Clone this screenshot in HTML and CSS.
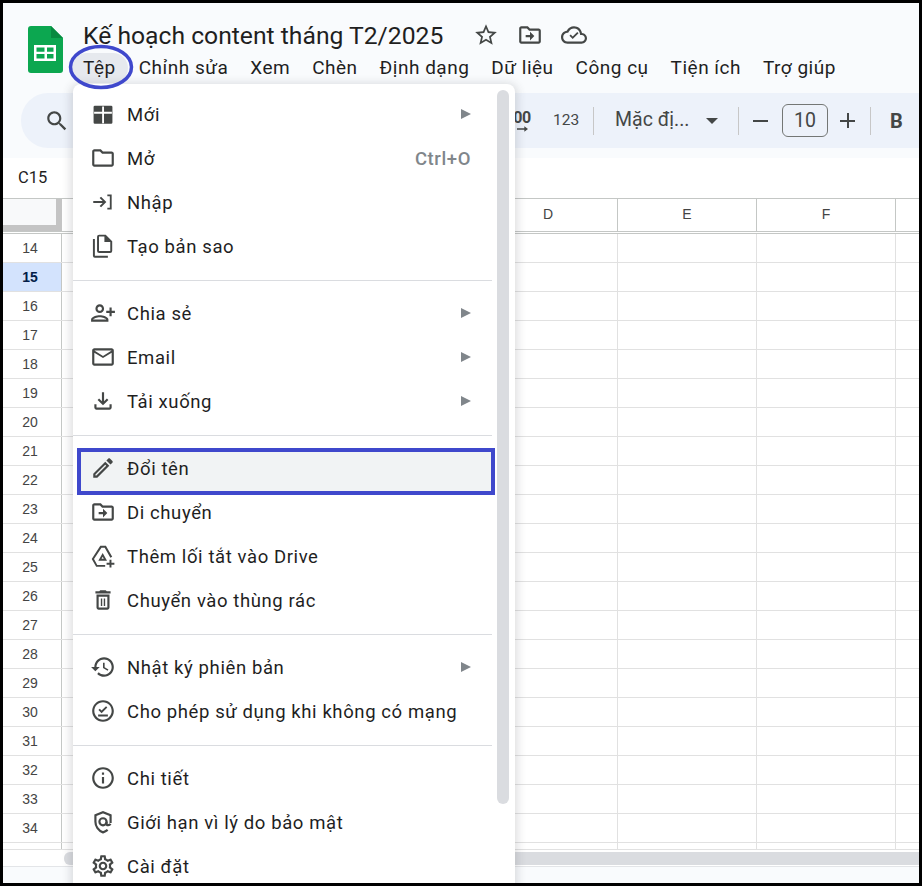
FILE: index.html
```html
<!DOCTYPE html>
<html lang="vi">
<head>
<meta charset="utf-8">
<title>Kế hoạch content tháng T2/2025</title>
<link rel="stylesheet" href="styles.css">
</head>
<body>
<div class="frame">
  <header class="head">
    <svg class="logo" viewBox="0 0 35 47"><path fill="#0ca750" d="M3 0h20l12 12v32a3 3 0 0 1-3 3H3a3 3 0 0 1-3-3V3a3 3 0 0 1 3-3z"/><path fill="#078a40" d="M23 0l12 12H23z"/><path fill="#fff" fill-rule="evenodd" d="M6 19h22v16H6zm2.500 2.500v4.300h8v-4.300zm10.500 0v4.300h6.500v-4.300zM8.500 28v4.500h8V28zM19 28v4.500h6.500V28z"/></svg>
    <div class="head-main">
      <div class="title-row">
        <h1 class="title">Kế hoạch content tháng T2/2025</h1>
        <div class="title-icons">
          <svg class="ti" viewBox="0 0 24 24"><path d="M22 9.240l-7.190-.62L12 2 9.190 8.630 2 9.240l5.460 4.730L5.820 21 12 17.270 18.180 21l-1.630-7.030L22 9.240zM12 15.400l-3.760 2.270 1-4.280-3.320-2.880 4.380-.38L12 6.100l1.710 4.040 4.380.38-3.320 2.880 1 4.280L12 15.400z"/></svg>
          <svg class="ti" viewBox="0 0 24 24"><path d="M20 6h-8l-2-2H4c-1.100 0-1.990.9-1.990 2L2 18c0 1.100.9 2 2 2h16c1.100 0 2-.9 2-2V8c0-1.100-.9-2-2-2zm0 12H4V6h5.170l2 2H20v10zm-8-4H8v-2h4V9l4 4-4 4v-3z"/></svg>
          <svg class="ti" viewBox="0 0 24 24"><path d="M19.350 10.040C18.670 6.590 15.640 4 12 4 9.110 4 6.600 5.640 5.350 8.040 2.340 8.360 0 10.910 0 14c0 3.310 2.690 6 6 6h13c2.760 0 5-2.240 5-5 0-2.640-2.050-4.780-4.650-4.960zM19 18H6c-2.210 0-4-1.790-4-4 0-2.050 1.530-3.760 3.560-3.970l1.070-.11.5-.95C8.080 7.140 9.940 6 12 6c2.620 0 4.880 1.860 5.390 4.430l.3 1.500 1.530.11c1.560.1 2.780 1.410 2.780 2.960 0 1.650-1.350 3-3 3zm-8.200-2.200l-3-3 1.200-1.200 1.800 1.800 4.200-4.200 1.200 1.200z"/></svg>
        </div>
      </div>
      <nav class="menubar">
        <span class="mb mb-active">Tệp</span>
        <span class="mb">Chỉnh sửa</span>
        <span class="mb">Xem</span>
        <span class="mb">Chèn</span>
        <span class="mb">Định dạng</span>
        <span class="mb">Dữ liệu</span>
        <span class="mb">Công cụ</span>
        <span class="mb">Tiện ích</span>
        <span class="mb">Trợ giúp</span>
      </nav>
    </div>
  </header>

  <div class="toolbar">
    <svg class="search" viewBox="0 0 24 24"><path d="M15.500 14h-.79l-.28-.27C15.410 12.590 16 11.110 16 9.500 16 5.910 13.090 3 9.500 3S3 5.910 3 9.500 5.910 16 9.500 16c1.610 0 3.090-.59 4.230-1.570l.27.28v.79l5 4.990L20.490 19l-4.990-5zm-6 0C7.010 14 5 11.990 5 9.500S7.010 5 9.500 5 14 7.010 14 9.500 11.990 14 9.500 14z"/></svg>
    <div class="tools">
      <span class="dec"><span class="dec-t">00</span><svg class="dec-a" viewBox="0 0 12 8"><path d="M0 3.200h8V1l4 3-4 3V4.800H0z"/></svg></span>
      <span class="t123">123</span>
      <i class="sep"></i>
      <span class="fontname">Mặc đị...</span>
      <i class="caret"></i>
      <i class="sep sep2"></i>
      <i class="minus"></i>
      <span class="size">10</span>
      <i class="plus"></i>
      <i class="sep sep3"></i>
      <b class="bold">B</b>
    </div>
  </div>

  <div class="formula"><span class="cellref">C15</span></div>

  <div class="sheet">
    <div class="colhead">
      <div class="corner"></div>
      <div class="c-abc"></div>
      <div class="c-col">D</div>
      <div class="c-col">E</div>
      <div class="c-col">F</div>
      <div class="c-rest"></div>
    </div>
    <div class="row"><div class="rh">14</div><div class="c-abc"></div><div class="cell"></div><div class="cell"></div><div class="cell"></div></div>
    <div class="row"><div class="rh rh-on">15</div><div class="c-abc"></div><div class="cell"></div><div class="cell"></div><div class="cell"></div></div>
    <div class="row"><div class="rh">16</div><div class="c-abc"></div><div class="cell"></div><div class="cell"></div><div class="cell"></div></div>
    <div class="row"><div class="rh">17</div><div class="c-abc"></div><div class="cell"></div><div class="cell"></div><div class="cell"></div></div>
    <div class="row"><div class="rh">18</div><div class="c-abc"></div><div class="cell"></div><div class="cell"></div><div class="cell"></div></div>
    <div class="row"><div class="rh">19</div><div class="c-abc"></div><div class="cell"></div><div class="cell"></div><div class="cell"></div></div>
    <div class="row"><div class="rh">20</div><div class="c-abc"></div><div class="cell"></div><div class="cell"></div><div class="cell"></div></div>
    <div class="row"><div class="rh">21</div><div class="c-abc"></div><div class="cell"></div><div class="cell"></div><div class="cell"></div></div>
    <div class="row"><div class="rh">22</div><div class="c-abc"></div><div class="cell"></div><div class="cell"></div><div class="cell"></div></div>
    <div class="row"><div class="rh">23</div><div class="c-abc"></div><div class="cell"></div><div class="cell"></div><div class="cell"></div></div>
    <div class="row"><div class="rh">24</div><div class="c-abc"></div><div class="cell"></div><div class="cell"></div><div class="cell"></div></div>
    <div class="row"><div class="rh">25</div><div class="c-abc"></div><div class="cell"></div><div class="cell"></div><div class="cell"></div></div>
    <div class="row"><div class="rh">26</div><div class="c-abc"></div><div class="cell"></div><div class="cell"></div><div class="cell"></div></div>
    <div class="row"><div class="rh">27</div><div class="c-abc"></div><div class="cell"></div><div class="cell"></div><div class="cell"></div></div>
    <div class="row"><div class="rh">28</div><div class="c-abc"></div><div class="cell"></div><div class="cell"></div><div class="cell"></div></div>
    <div class="row"><div class="rh">29</div><div class="c-abc"></div><div class="cell"></div><div class="cell"></div><div class="cell"></div></div>
    <div class="row"><div class="rh">30</div><div class="c-abc"></div><div class="cell"></div><div class="cell"></div><div class="cell"></div></div>
    <div class="row"><div class="rh">31</div><div class="c-abc"></div><div class="cell"></div><div class="cell"></div><div class="cell"></div></div>
    <div class="row"><div class="rh">32</div><div class="c-abc"></div><div class="cell"></div><div class="cell"></div><div class="cell"></div></div>
    <div class="row"><div class="rh">33</div><div class="c-abc"></div><div class="cell"></div><div class="cell"></div><div class="cell"></div></div>
    <div class="row"><div class="rh">34</div><div class="c-abc"></div><div class="cell"></div><div class="cell"></div><div class="cell"></div></div>
    <div class="row row-cut"><div class="rh"></div><div class="c-abc"></div><div class="cell"></div><div class="cell"></div><div class="cell"></div></div>
  </div>
  <div class="hscroll"><div class="hthumb"></div></div>
  <div class="foot"></div>

  <div class="menu">
    <div class="menu-thumb"></div>
    <div class="mi"><svg class="ic" viewBox="0 0 24 24"><path fill-rule="evenodd" d="M4.500 4.400h15a1.200 1.200 0 0 1 1.200 1.200v14.200a1.200 1.200 0 0 1-1.200 1.200h-15a1.200 1.200 0 0 1-1.200-1.200V5.600a1.200 1.200 0 0 1 1.200-1.200zM3.800 10v1.700h7.400v8.800h1.700v-8.800h7.300V10h-7.300V5h-1.700v5z"/></svg><span class="lb">Mới</span><i class="arr"></i></div>
    <div class="mi"><svg class="ic" viewBox="0 0 24 24"><path d="M9.170 6l2 2H20v10H4V6h5.170M10 4H4c-1.100 0-1.990.9-1.990 2L2 18c0 1.100.9 2 2 2h16c1.100 0 2-.9 2-2V8c0-1.100-.9-2-2-2h-8l-2-2z"/></svg><span class="lb">Mở</span><span class="kb">Ctrl+O</span></div>
    <div class="mi"><svg class="ic" viewBox="0 0 24 24"><path d="M16 5h4v14h-4v-1.700h2.300V6.700H16zM3 11.100h8.700L8.900 8.300l1.300-1.200 4.900 4.900-4.900 4.900-1.300-1.200 2.800-2.800H3z"/></svg><span class="lb">Nhập</span></div>
    <div class="mi"><svg class="ic" viewBox="0 0 24 24"><path d="M14.500 1.500H8.500A2 2 0 0 0 6.500 3.500v13a2 2 0 0 0 2 2h10a2 2 0 0 0 2-2V7.500zM18.700 16.700H8.300V3.300h5v5h5.400zM4.500 5.500H2.700v15.500a1.800 1.800 0 0 0 1.800 1.800h12v-1.800h-12z"/></svg><span class="lb">Tạo bản sao</span></div>
    <div class="msep"></div>
    <div class="mi"><svg class="ic" viewBox="0 0 24 24"><path transform="matrix(-1 0 0 1 24 0)" d="M15 12c2.210 0 4-1.790 4-4s-1.790-4-4-4-4 1.790-4 4 1.790 4 4 4zm0-6c1.100 0 2 .9 2 2s-.9 2-2 2-2-.9-2-2 .9-2 2-2zm0 8c-2.670 0-8 1.340-8 4v2h16v-2c0-2.660-5.330-4-8-4zm-6 4c.22-.72 3.310-2 6-2 2.700 0 5.800 1.290 6 2H9zm-3-3v-3h3v-2H6V7H4v3H1v2h3v3h2z"/></svg><span class="lb">Chia sẻ</span><i class="arr"></i></div>
    <div class="mi"><svg class="ic" viewBox="0 0 24 24"><path d="M22 6c0-1.100-.9-2-2-2H4c-1.100 0-2 .9-2 2v12c0 1.100.9 2 2 2h16c1.100 0 2-.9 2-2V6zm-2 0l-8 5-8-5h16zm0 12H4V8l8 5 8-5v10z"/></svg><span class="lb">Email</span><i class="arr"></i></div>
    <div class="mi"><svg class="ic" viewBox="0 0 24 24"><path d="M18 15v3H6v-3H4v3c0 1.100.9 2 2 2h12c1.100 0 2-.9 2-2v-3h-2zm-1-4l-1.410-1.410L13 12.170V4h-2v8.170L8.410 9.590 7 11l5 5 5-5z"/></svg><span class="lb">Tải xuống</span><i class="arr"></i></div>
    <div class="msep"></div>
    <div class="mi mi-on"><svg class="ic" viewBox="0 0 24 24"><path d="M14.060 9.020l.92.92L5.920 19H5v-.92l9.060-9.060M17.660 3c-.25 0-.51.1-.7.29l-1.830 1.830 3.750 3.750 1.830-1.830c.39-.39.39-1.020 0-1.410l-2.340-2.340c-.2-.2-.45-.29-.71-.29zm-3.600 3.190L3 17.250V21h3.750L17.810 9.940l-3.750-3.750z"/></svg><span class="lb">Đổi tên</span></div>
    <div class="mi"><svg class="ic" viewBox="0 0 24 24"><path d="M20 6h-8l-2-2H4c-1.100 0-1.990.9-1.990 2L2 18c0 1.100.9 2 2 2h16c1.100 0 2-.9 2-2V8c0-1.100-.9-2-2-2zm0 12H4V6h5.170l2 2H20v10zm-8-4H8v-2h4V9l4 4-4 4v-3z"/></svg><span class="lb">Di chuyển</span></div>
    <div class="mi"><svg class="ic" viewBox="0 0 24 24"><path d="M9.500 2.500h5.200L20.500 12.600l-1.700.9-5.200-9.200h-3L3.700 14.800l3 5.400H14v1.800H5.700L1.600 14.800zM11.700 9.300l4 7H7.700zm0 3.500l-1 1.800h2z"/><path d="M18 15.500h1.800v2.700h2.700V20h-2.700v2.700H18V20h-2.700v-1.800H18z"/></svg><span class="lb">Thêm lối tắt vào Drive</span></div>
    <div class="mi"><svg class="ic" viewBox="0 0 24 24"><path d="M6 19c0 1.100.9 2 2 2h8c1.100 0 2-.9 2-2V7H6v12zm2-10h8v10H8V9zm7.500-5l-1-1h-5l-1 1H5v2h14V4h-3.500zM10 10.500h1.300v7H10zm2.700 0H14v7h-1.300z"/></svg><span class="lb">Chuyển vào thùng rác</span></div>
    <div class="msep"></div>
    <div class="mi"><svg class="ic" viewBox="0 0 24 24"><path d="M13 3c-4.970 0-9 4.030-9 9H1l3.890 3.890.07.14L9 12H6c0-3.870 3.130-7 7-7s7 3.130 7 7-3.130 7-7 7c-1.930 0-3.680-.79-4.940-2.060l-1.420 1.420C8.270 19.990 10.510 21 13 21c4.970 0 9-4.030 9-9s-4.030-9-9-9zm-1 5v5l4.280 2.540.72-1.210-3.500-2.080V8H12z"/></svg><span class="lb">Nhật ký phiên bản</span><i class="arr"></i></div>
    <div class="mi"><svg class="ic" viewBox="0 0 24 24"><path d="M12 2C6.500 2 2 6.500 2 12s4.500 10 10 10 10-4.500 10-10S17.500 2 12 2zm0 18c-4.410 0-8-3.590-8-8s3.590-8 8-8 8 3.590 8 8-3.590 8-8 8zm4.500-3h-9v-1.800h9zm-5.800-3L7.800 11.100l1.200-1.200 1.700 1.700 4.100-4.100 1.200 1.200z"/></svg><span class="lb">Cho phép sử dụng khi không có mạng</span></div>
    <div class="msep"></div>
    <div class="mi"><svg class="ic" viewBox="0 0 24 24"><path d="M11 7h2v2h-2zm0 4h2v6h-2zm1-9C6.480 2 2 6.480 2 12s4.480 10 10 10 10-4.480 10-10S17.520 2 12 2zm0 18c-4.410 0-8-3.590-8-8s3.590-8 8-8 8 3.590 8 8-3.590 8-8 8z"/></svg><span class="lb">Chi tiết</span></div>
    <div class="mi"><svg class="ic" viewBox="0 0 24 24"><g class="ln"><path d="M16.300 19.300c-1.200 1-2.600 1.800-4.300 2.300-4.300-1.400-7-5.600-7-9.800V5.700L12 3l7 2.700V13"/><circle cx="12" cy="11.800" r="3.300"/><path d="M15.300 11.800v1.700c0 1.800 2.600 1.800 3.700.2"/></g></svg><span class="lb">Giới hạn vì lý do bảo mật</span></div>
    <div class="mi"><svg class="ic" viewBox="0 0 24 24"><path d="M19.430 12.980c.04-.32.07-.64.07-.98 0-.34-.03-.66-.07-.98l2.110-1.650c.19-.15.24-.42.12-.64l-2-3.460c-.09-.16-.26-.25-.44-.25-.06 0-.12.01-.17.03l-2.490 1c-.52-.4-1.080-.73-1.690-.98l-.38-2.650C14.460 2.180 14.250 2 14 2h-4c-.25 0-.46.18-.49.42l-.38 2.650c-.61.25-1.170.59-1.690.98l-2.490-1c-.06-.02-.12-.03-.18-.03-.17 0-.34.09-.43.25l-2 3.460c-.13.22-.07.49.12.64l2.110 1.650c-.04.32-.07.65-.07.98 0 .33.03.66.07.98l-2.110 1.650c-.19.15-.24.42-.12.64l2 3.460c.09.16.26.25.44.25.06 0 .12-.01.17-.03l2.490-1c.52.4 1.080.73 1.690.98l.38 2.650c.03.24.24.42.49.42h4c.25 0 .46-.18.49-.42l.38-2.650c.61-.25 1.170-.59 1.690-.98l2.490 1c.06.02.12.03.18.03.17 0 .34-.09.43-.25l2-3.460c.12-.22.07-.49-.12-.64l-2.110-1.650zm-1.980-1.710c.04.31.05.52.05.73 0 .21-.02.43-.05.73l-.14 1.130.89.7 1.080.84-.7 1.210-1.270-.51-1.040-.42-.9.68c-.43.32-.84.56-1.250.73l-1.060.43-.16 1.130-.2 1.350h-1.400l-.19-1.350-.16-1.130-1.060-.43c-.43-.18-.83-.41-1.230-.71l-.91-.7-1.060.43-1.270.51-.7-1.210 1.080-.84.89-.7-.14-1.130c-.03-.31-.05-.54-.05-.74s.02-.43.05-.73l.14-1.130-.89-.7-1.080-.84.7-1.210 1.270.51 1.040.42.9-.68c.43-.32.84-.56 1.250-.73l1.060-.43.16-1.130.2-1.350h1.390l.19 1.350.16 1.130 1.060.43c.43.18.83.41 1.230.71l.91.7 1.060-.43 1.270-.51.7 1.210-1.070.85-.89.7.14 1.130zM12 8c-2.210 0-4 1.790-4 4s1.790 4 4 4 4-1.790 4-4-1.790-4-4-4zm0 6c-1.100 0-2-.9-2-2s.9-2 2-2 2 .9 2 2-.9 2-2 2z"/></svg><span class="lb">Cài đặt</span></div>
  </div>

  <svg class="ring" viewBox="0 0 66 46"><ellipse cx="33" cy="23" rx="30.500" ry="20.500" fill="none" stroke="#3f48cc" stroke-width="3.500"/></svg>
</div>
</body>
</html>
```
FILE: styles.css
```css
*, *::before { box-sizing: border-box; }
html, body { margin: 0; padding: 0; }
body { font-family: Roboto, "Liberation Sans", sans-serif; color: #1f1f1f; }
svg { display: block; fill: #444746; flex: none; }

.frame {
  position: relative;
  width: 922px;
  height: 886px;
  border: 3px solid #000;
  background: #f9fbfd;
  overflow: hidden;
  display: flex;
  flex-direction: column;
}

/* header */
.head { height: 90px; display: flex; padding: 23px 0 0 25px; flex: none; }
.logo { width: 35px; height: 47px; }
.head-main { margin-left: 20px; }
.title-row { display: flex; align-items: center; height: 26px; margin-top: -4px; }
.title { margin: 0; padding-top: 2px; font-size: 24.700px; font-weight: 400; line-height: 26px; white-space: nowrap; }
.title-icons { display: flex; gap: 18px; margin-left: 30px; }
.ti { width: 26px; height: 26px; }
.menubar { display: flex; margin: 5px 0 0 -11px; font-size: 19px; letter-spacing: .5px; line-height: 30px; height: 30px; }
.mb { padding: 0 11px; white-space: nowrap; border-radius: 15px; }
.mb-active { background: #e6e9ee; padding-right: 12px; }

/* toolbar */
.toolbar {
  height: 55px;
  margin-left: 18px;
  background: #edf2fa;
  border-radius: 27px 0 0 27px;
  display: flex;
  align-items: center;
  padding-left: 23px;
  flex: none;
}
.search { width: 26px; height: 26px; }
.tools { margin-left: auto; display: flex; align-items: center; color: #444746; padding-right: 16px; }
.dec { display: flex; flex-direction: column; align-items: center; width: 18px; margin-top: 2px; }
.dec-t { font-size: 16px; line-height: 14px; font-weight: 700; letter-spacing: -.5px; }
.dec-a { width: 11px; height: 8px; }
.t123 { font-size: 15.500px; margin-left: 22px; width: 26px; margin-bottom: 2px; white-space: nowrap; }
.sep { width: 1px; height: 28px; background: #c7c7c7; }
.t123 + .sep { margin-left: 14px; }
.fontname { font-size: 19.500px; margin-left: 21px; width: 76px; white-space: nowrap; margin-bottom: 3px; }
.caret { width: 0; height: 0; border: 6px solid transparent; border-top-color: #444746; border-bottom: 0; margin-left: 15px; }
.sep2 { margin-left: 20px; }
.minus { width: 15px; height: 2px; background: #444746; margin-left: 14px; }
.size { width: 46px; height: 33px; border: 1px solid #747775; border-radius: 6px; margin-left: 14px; font-size: 19.500px; line-height: 31px; text-align: center; }
.plus { position: relative; width: 15px; height: 15px; margin-left: 12px; background: linear-gradient(#444746, #444746) center / 100% 2px no-repeat, linear-gradient(#444746, #444746) center / 2px 100% no-repeat; }
.sep3 { margin-left: 15px; }
.bold { font-size: 20px; margin-left: 19px; font-weight: 700; width: 13px; }

/* formula bar */
.formula { height: 40px; margin-top: 10px; background: #fff; display: flex; align-items: center; padding: 0 0 2px 15px; flex: none; }
.cellref { font-size: 16.500px; color: #1f1f1f; }

/* sheet */
.sheet { background: #fff; height: 652px; overflow: hidden; flex: none; }
.colhead { display: flex; height: 36px; border-top: 1px solid #c4c7c5; border-bottom: 3px double #c4c7c5; font: 14px "Liberation Sans", sans-serif; color: #444; }
.corner { width: 59px; flex: none; background: #f8f9fa; border-right: 6px solid #c4c4c4; border-bottom: 6px solid #c4c4c4; }
.c-abc { width: 417px; flex: none; }
.c-col { width: 139px; flex: none; text-align: center; line-height: 31px; border-right: 1px solid #c4c7c5; }
.c-rest { flex: 1; }
.row { display: flex; height: 29px; border-bottom: 1px solid #e1e1e1; }
.row-cut { height: 7px; }
.rh { width: 59px; flex: none; border-right: 1px solid #c4c7c5; text-align: center; font: 14px/28px "Liberation Sans", sans-serif; color: #444; padding-right: 4px; }
.rh-on { background: #d3e3fd; color: #041e49; font-weight: 700; }
.cell { width: 139px; flex: none; border-right: 1px solid #e1e1e1; }

/* bottom */
.hscroll { height: 17px; border-bottom: 1px solid #e3e5e8; padding: 2px 0 2px 61px; background: #fff; flex: none; }
.hthumb { height: 13px; background: #dadce0; border-radius: 6px 0 0 6px; }
.foot { flex: 1; background: #f9fbfd; }

/* menu */
.menu {
  position: absolute;
  left: 70px;
  top: 81px;
  width: 442px;
  height: 830px;
  background: #fff;
  border-radius: 8px;
  padding: 8px 0;
  box-shadow: 0 2px 8px 3px rgba(60, 64, 67, .16);
  overflow: hidden;
}
.menu-thumb { position: absolute; left: 424px; top: 6px; width: 12px; height: 714px; background: #dadce0; border-radius: 6px; }
.mi { height: 44px; display: flex; align-items: center; padding: 0 44px 0 17px; font-size: 18.500px; letter-spacing: .6px; white-space: nowrap; }
.ic { width: 26px; height: 26px; margin-right: 11px; }
.lb { flex: 1; padding-top: 2px; }
.ln { fill: none; stroke: #444746; stroke-width: 2; }
.kb { color: #80868b; font-weight: 500; padding-top: 2px; }
.arr { width: 0; height: 0; border-left: 10px solid #80868b; border-top: 5px solid transparent; border-bottom: 5px solid transparent; }
.msep { height: 1px; margin: 12px 23px 10px 0; background: #dadce0; }
.mi-on { position: relative; isolation: isolate; }
.mi-on::before { content: ""; position: absolute; z-index: -1; left: 4px; top: 2px; width: 418px; height: 47px; background: #f1f3f4; border: 4px solid #3f48cc; }
.ring { position: absolute; left: 65px; top: 41px; width: 66px; height: 46px; }
```
